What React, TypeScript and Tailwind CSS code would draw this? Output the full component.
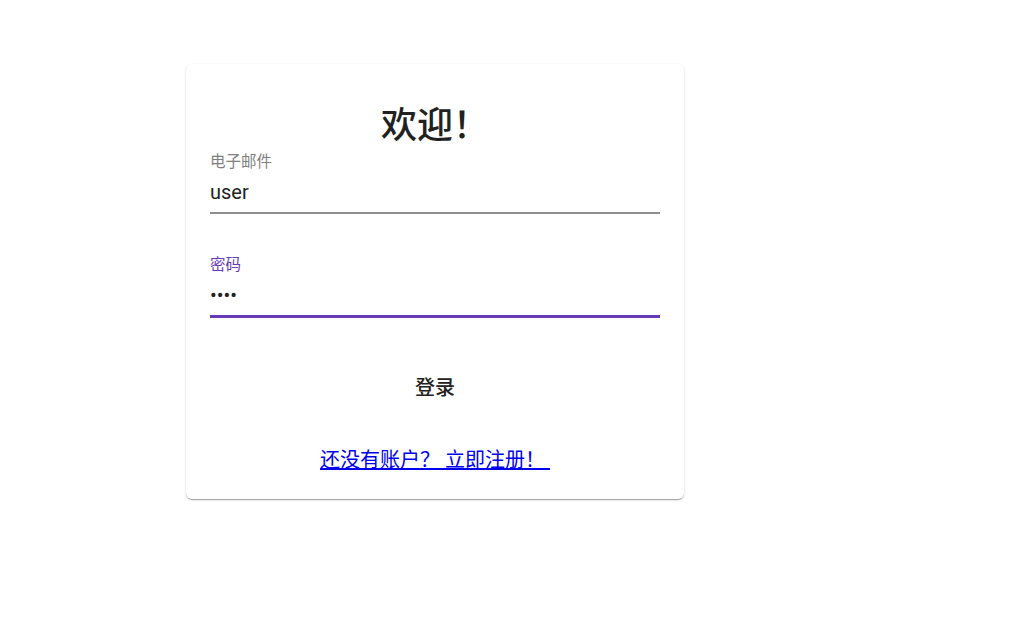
import React from "react";

export default function App() {
  const font = { fontFamily: "Roboto, 'Noto Sans CJK SC', sans-serif" };
  return (
    <div className="min-h-[622px] w-full bg-white pt-[64px] pl-[186px]" style={font}>
      <div className="w-[498px] h-[435px] bg-white rounded-[6px] px-[24px] flex flex-col shadow-[0_2px_1px_-1px_rgba(0,0,0,0.2),0_1px_1px_0_rgba(0,0,0,0.14),0_1px_3px_0_rgba(0,0,0,0.12)]">
        <h1 className="mt-[40px] h-[44px] leading-[44px] text-[36px] text-center text-[#212121] font-medium">
          欢迎！
        </h1>
        <div className="mt-[3px] flex flex-col">
          <label className="mt-[1px] h-[20px] leading-[20px] text-[15.5px] text-[#7f7f7f]">电子邮件</label>
          <input
            readOnly
            value="user"
            className="mt-[6px] h-[28px] leading-[28px] text-[20px] text-[#212121] outline-none bg-transparent p-0"
          />
          <div className="mt-[6px] h-[2px] bg-[#8f8f8f]" />
        </div>
        <div className="mt-[40px] flex flex-col">
          <label className="mt-[1px] h-[20px] leading-[20px] text-[15.5px] text-[#673ab7]">密码</label>
          <input
            readOnly
            type="password"
            value="1234"
            className="mt-[6px] h-[28px] leading-[28px] text-[20px] text-[#212121] outline-none bg-transparent p-0"
          />
          <div className="mt-[6px] h-[3px] bg-[#673ab7]" />
        </div>
        <div className="mt-[52px] flex justify-center">
          <button className="h-[36px] px-4 text-[20px] font-medium text-[#212121] bg-transparent">登录</button>
        </div>
        <div className="mt-[42px] text-center leading-[24px]">
          <a href="#" className="text-[20px] text-[#0000ee] underline">还没有账户？ 立即注册！{"\u00a0"}</a>
        </div>
      </div>
    </div>
  );
}
